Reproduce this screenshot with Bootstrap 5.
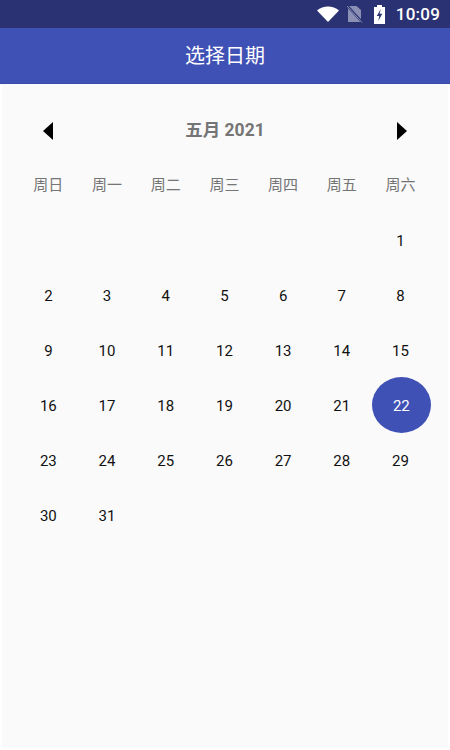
<!DOCTYPE html>
<html lang="zh">
<head>
<meta charset="utf-8">
<title>选择日期</title>
<link href="https://cdn.jsdelivr.net/npm/bootstrap@5.3.0/dist/css/bootstrap.min.css" rel="stylesheet">
<style>
html,body{height:100%;margin:0}
body{background:#fff;font-family:Roboto,"Noto Sans CJK SC",sans-serif;overflow:hidden}
.phone{height:750px;width:450px;display:flex;flex-direction:column}
.statusline{height:28px;background:#2a3273;color:#fff;padding-right:10px}
.statusline .clock{font-size:17px;font-weight:500;letter-spacing:.2px;margin-left:10px;line-height:1}
.ic-wifi{margin-right:6px}
.ic-sim{margin-right:10px}
.titlebar{height:56px;background:#3f51b5;border-bottom:1px solid #3a4bb0;color:#fff;font-size:20px;box-shadow:0 1px 1px rgba(0,0,0,.04)}
.sheet{flex:1;background:#fafafa;margin:0 2px 2px;padding:0 17px}
.monthbar{height:88px;padding-top:5px}
.monthbar .monthname{font-size:17.5px;font-weight:700;color:#757575}
.pager{width:58.7px}
.grid7{display:grid;grid-template-columns:repeat(7,58.7px)}
.wk{height:27px;color:#757575;font-size:15px;display:flex;align-items:center;justify-content:center}
.dayrow{margin-top:14px}
.dy{height:55px;padding-top:2px;font-size:15px;color:#111;display:flex;align-items:center;justify-content:center}
.dy-on{color:#fff;background:#3f51b5;border-radius:50%;width:59px;height:56px;justify-self:end;margin:-1px -1px 0 0;padding-top:2px}
</style>
</head>
<body>
<div class="phone">
  <div class="statusline d-flex align-items-center justify-content-end">
    <svg class="ic-wifi" width="24" height="16" viewBox="0 0 24 16"><path d="M1 4.500C4 1.800 8 .5 12 .5s8 1.300 11 4L12 16z" fill="#fff"/></svg>
    <svg class="ic-sim" width="17" height="18" viewBox="0 0 17 18"><path d="M2 1h8.500L15 5v12H2z" fill="#8b90b4"/><path d="M1 0.500 16 17" stroke="#2a3273" stroke-width="2.400"/><path d="M1 1 16 17.500" stroke="#8b90b4" stroke-width="1"/></svg>
    <svg width="13" height="19" viewBox="0 0 13 19"><path d="M4 0h5v2h3v17H1V2h3z" fill="#fff"/><path d="M7.800 4 3.800 11h2.500l-1 5 4-7.200H6.600z" fill="#2a3273"/></svg>
    <span class="clock">10:09</span>
  </div>
  <div class="titlebar d-flex align-items-center justify-content-center">选择日期</div>
  <div class="sheet">
    <div class="monthbar d-flex align-items-center justify-content-between">
      <div class="pager d-flex justify-content-center"><svg width="10" height="18" viewBox="0 0 10 18"><path d="M10 0v18L0 9z" fill="#000"/></svg></div>
      <div class="monthname">五月 2021</div>
      <div class="pager d-flex justify-content-center"><svg width="10" height="18" viewBox="0 0 10 18"><path d="M0 0v18l10-9z" fill="#000"/></svg></div>
    </div>
    <div class="grid7">
      <div class="wk">周日</div><div class="wk">周一</div><div class="wk">周二</div><div class="wk">周三</div><div class="wk">周四</div><div class="wk">周五</div><div class="wk">周六</div>
    </div>
    <div class="grid7 dayrow">
      <div></div><div></div><div></div><div></div><div></div><div></div><div class="dy">1</div>
      <div class="dy">2</div><div class="dy">3</div><div class="dy">4</div><div class="dy">5</div><div class="dy">6</div><div class="dy">7</div><div class="dy">8</div>
      <div class="dy">9</div><div class="dy">10</div><div class="dy">11</div><div class="dy">12</div><div class="dy">13</div><div class="dy">14</div><div class="dy">15</div>
      <div class="dy">16</div><div class="dy">17</div><div class="dy">18</div><div class="dy">19</div><div class="dy">20</div><div class="dy">21</div><div class="dy dy-on">22</div>
      <div class="dy">23</div><div class="dy">24</div><div class="dy">25</div><div class="dy">26</div><div class="dy">27</div><div class="dy">28</div><div class="dy">29</div>
      <div class="dy">30</div><div class="dy">31</div>
    </div>
  </div>
</div>
<script src="https://cdn.jsdelivr.net/npm/bootstrap@5.3.0/dist/js/bootstrap.bundle.min.js"></script>
</body>
</html>
